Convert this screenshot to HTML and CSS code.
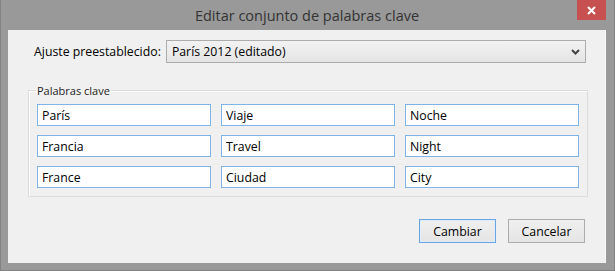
FILE: index.html
```html
<!DOCTYPE html>
<html lang="es">
<head>
    <meta charset="UTF-8">
    <title>Editar conjunto de palabras clave</title>
    <link rel="stylesheet" href="styles.css">
</head>
<body>

<div class="window">
    <div class="titlebar">
        <span></span>
        <span class="title">Editar conjunto de palabras clave</span>
        <button class="close" title="Cerrar">
            <svg width="9" height="9" viewBox="0 0 9 9"><path d="M1 1L8 8M8 1L1 8" stroke="#fff" stroke-width="2"/></svg>
        </button>
    </div>

    <div class="content">
        <div class="preset-row">
            <label for="preset">Ajuste preestablecido:</label>
            <div class="select">
                <span>París 2012 (editado)</span>
                <svg width="9" height="6" viewBox="0 0 9 6"><path d="M1 1L4.5 4.5L8 1" fill="none" stroke="#444" stroke-width="2"/></svg>
            </div>
        </div>

        <fieldset class="group">
            <legend>Palabras clave</legend>
            <div class="keywords">
                <input type="text" value="París">
                <input type="text" value="Viaje">
                <input type="text" value="Noche">
                <input type="text" value="Francia">
                <input type="text" value="Travel">
                <input type="text" value="Night">
                <input type="text" value="France">
                <input type="text" value="Ciudad">
                <input type="text" value="City">
            </div>
        </fieldset>

        <div class="actions">
            <button class="btn default">Cambiar</button>
            <button class="btn">Cancelar</button>
        </div>
    </div>
</div>

</body>
</html>
```

FILE: styles.css
```css
body {
    margin: 0;
    font-family: 'Open Sans', 'Noto Sans', sans-serif;
    background-color: #999;
}
.window {
    width: 615px;
    height: 271px;
    box-sizing: border-box;
    background-color: #999;
    border: 1px solid #828282;
    border-top: none;
    padding: 0 8px 7px 7px;
    display: flex;
    flex-direction: column;
}
.titlebar {
    height: 30px;
    display: grid;
    grid-template-columns: 1fr auto 1fr;
    align-items: start;
}
.title {
    font-size: 14.5px;
    color: #333;
    line-height: 30px;
    padding-top: 1px;
}
.close {
    justify-self: end;
    width: 29px;
    height: 20px;
    border: none;
    padding: 0;
    background-color: #c75050;
    display: flex;
    align-items: center;
    justify-content: center;
}
.content {
    flex: 1;
    background-color: #f0f0f0;
    border-right: 1px solid #f7f7f7;
    padding: 10px 19px 0 26px;
}
.preset-row {
    display: flex;
    align-items: center;
    gap: 5px;
    font-size: 12.3px;
    color: #000;
}
.select {
    flex: 1;
    height: 23px;
    box-sizing: border-box;
    border: 1px solid #acacac;
    background: linear-gradient(#f2f2f2, #e5e5e5);
    display: flex;
    align-items: center;
    justify-content: space-between;
    padding: 0 5px 0 5px;
}
.group {
    margin: 20px 0 0 -6px;
    width: 558px;
    box-sizing: border-box;
    border: 1px solid #dcdcdc;
    box-shadow: inset 1px 1px 0 #fff;
    padding: 6px 8px 8px 8px;
}
.group legend {
    font-size: 11px;
    color: #222;
    padding: 0 1px;
    margin-left: -1px;
}
.keywords {
    display: grid;
    grid-template-columns: repeat(3, 174px);
    column-gap: 10px;
    row-gap: 9px;
}
.keywords input {
    height: 22px;
    box-sizing: border-box;
    border: 1px solid #7eb4ea;
    background-color: #fff;
    padding: 0 4px;
    font-family: 'Open Sans', 'Noto Sans', sans-serif;
    font-size: 12.3px;
    color: #000;
    outline: none;
}
.actions {
    display: flex;
    justify-content: flex-end;
    gap: 12px;
    margin-top: 22px;
    margin-right: 1px;
}
.btn {
    width: 77px;
    height: 24px;
    border: 1px solid #acacac;
    background: linear-gradient(#f0f0f0, #e5e5e5);
    font-family: 'Open Sans', 'Noto Sans', sans-serif;
    font-size: 12.3px;
    color: #000;
    padding: 0;
}
.btn.default {
    border-color: #6aa6e2;
    box-shadow: inset 0 0 0 1px #dcecfc;
}
```
